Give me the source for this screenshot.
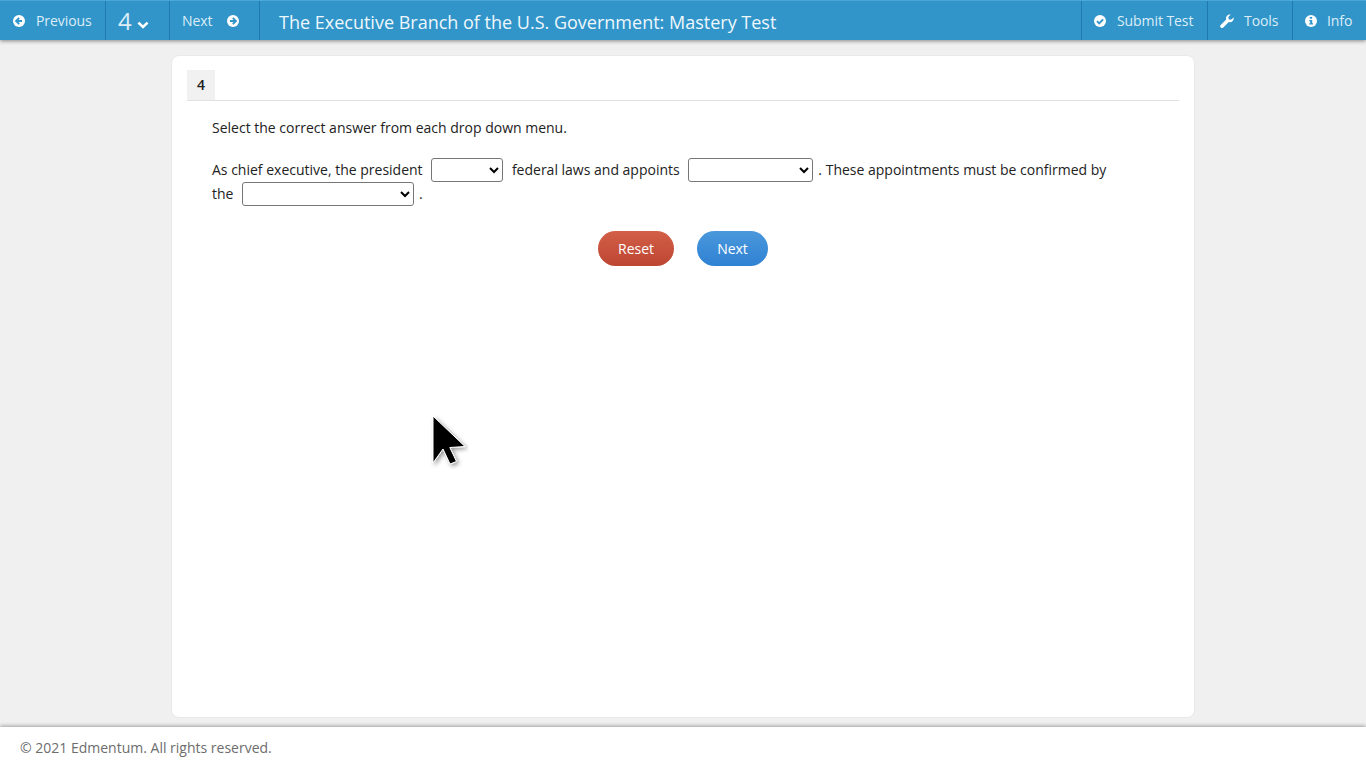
<template>
  <div class="page">
    <header class="topbar">
      <nav class="group">
        <button class="tb prev">
          <svg class="ic" viewBox="0 0 12 12"><circle cx="6" cy="6" r="6" fill="#fff"/><path d="M6.200 2.900 3.100 6l3.100 3.100M3.400 6h5.600" fill="none" stroke="#3195ca" stroke-width="1.900"/></svg>
          <span>Previous</span>
        </button>
        <button class="tb num">
          <span class="big">4</span>
          <svg class="chev" viewBox="0 0 12 8"><path d="M1.400 1.600 6 6l4.600-4.400" fill="none" stroke="#fff" stroke-width="2.600"/></svg>
        </button>
        <button class="tb next">
          <span>Next</span>
          <svg class="ic" viewBox="0 0 12 12"><circle cx="6" cy="6" r="6" fill="#fff"/><path d="M5.800 2.900 8.900 6 5.800 9.100M8.600 6H3" fill="none" stroke="#3195ca" stroke-width="1.900"/></svg>
        </button>
      </nav>
      <h1 class="title">The Executive Branch of the U.S. Government: Mastery Test</h1>
      <nav class="group right">
        <button class="tb submit">
          <svg class="ic" viewBox="0 0 12 12"><circle cx="6" cy="6" r="6" fill="#fff"/><path d="M3 6.100 5.200 8.300 9.100 4.300" fill="none" stroke="#3195ca" stroke-width="1.900"/></svg>
          <span>Submit Test</span>
        </button>
        <button class="tb tools">
          <svg class="ic wrench" viewBox="0 0 14 14"><path d="M13.600 3.400c.3 1.500-.1 3-1.200 3.900-1 .9-2.400 1.100-3.600.7l-5.500 5.500c-.7.7-1.900.7-2.600 0-.7-.7-.7-1.900 0-2.600L6.200 5.400C5.800 4.100 6 2.700 7 1.700 8 .7 9.400.3 10.800.6L8.300 3l.4 2.300 2.300.5z" fill="#fff"/></svg>
          <span>Tools</span>
        </button>
        <button class="tb info">
          <svg class="ic" viewBox="0 0 12 12"><circle cx="6" cy="6" r="6" fill="#fff"/><path d="M4.800 2h2.300v1.800H4.800zM4.300 5h2.900v3.300H8v1.300H4.300V8.300h.9V6.200h-.9z" fill="#3195ca"/></svg>
          <span>Info</span>
        </button>
      </nav>
    </header>

    <main class="main">
      <section class="card">
        <div class="tabline"><span class="tab">4</span></div>
        <div class="question">
          <p class="prompt">Select the correct answer from each drop down menu.</p>
          <p class="sentence">As chief executive, the president <select class="sel s1"><option></option></select> federal laws and appoints <select class="sel s2"><option></option></select>. These appointments must be confirmed by the <select class="sel s3"><option></option></select>.</p>
        </div>
        <div class="actions">
          <button class="pill reset">Reset</button>
          <button class="pill go">Next</button>
        </div>
      </section>
    </main>

    <footer class="footer">© 2021 Edmentum. All rights reserved.</footer>

    <svg class="cursor" viewBox="0 0 40 56" width="40" height="56">
      <defs>
        <filter id="curshadow" x="-30%" y="-30%" width="160%" height="160%"><feDropShadow dx="2" dy="2" stdDeviation="2" flood-color="#000" flood-opacity=".4"/></filter>
      </defs>
      <path d="M4 2 4 49 14 35 21 50 27.500 47.500 20.800 33.500 36 32.500z" fill="#000" stroke="#fff" stroke-width="1" filter="url(#curshadow)"/>
    </svg>
  </div>
</template>

<style>
html, body { margin: 0; background: #f0f0f0; }
</style>

<style scoped>
.page {
  position: relative;
  height: 768px;
  display: flex;
  flex-direction: column;
  overflow: hidden;
  background: #f0f0f0;
  font-family: "Open Sans", sans-serif;
  font-size: 14px;
  color: #222;
}
.topbar {
  height: 40px;
  flex: none;
  display: flex;
  align-items: stretch;
  background: #3195ca;
  border-top: 1px solid #4ba6d8;
  box-sizing: border-box;
  box-shadow: 0 1px 4px rgba(0, 0, 0, .45);
  z-index: 2;
}
.group { display: flex; align-items: stretch; }
.right { margin-left: auto; }
.tb {
  display: flex;
  align-items: center;
  padding: 0;
  border: 0;
  border-right: 1px solid #2079ad;
  background: transparent;
  color: #dcedf7;
  font: 14px "Open Sans", sans-serif;
  letter-spacing: -.08px;
  box-sizing: border-box;
}
.ic { width: 12px; height: 12px; flex: none; }
.prev { width: 106px; padding-left: 13px; gap: 11px; }
.num { width: 64px; padding-left: 12px; }
.big { font-size: 24px; line-height: 30px; }
.chev { width: 12px; height: 8px; margin: 8px 0 0 5px; }
.next { width: 90px; padding-left: 12px; gap: 15px; }
.title {
  margin: 0 0 0 19px;
  font-size: 18px;
  font-weight: 400;
  line-height: 42px;
  color: #eef7fc;
}
.right .tb { border-right: 0; border-left: 1px solid #2079ad; }
.submit { width: 126px; padding-left: 12px; gap: 11px; }
.tools { width: 85px; padding-left: 12px; gap: 10px; }
.info { width: 74px; padding-left: 12px; gap: 10px; }
.wrench { width: 14px; height: 14px; }
.main { flex: 1; min-height: 0; padding: 15px 171px 9px; box-sizing: border-box; }
.card {
  height: 100%;
  box-sizing: border-box;
  background: #fff;
  border: 1px solid #e9e9e9;
  border-radius: 8px;
  padding: 14px 15px 0;
}
.tabline { height: 30px; border-bottom: 1px solid #e2e2e2; display: flex; }
.tab {
  width: 28px;
  height: 30px;
  background: #f1f1f1;
  text-align: center;
  font-weight: 600;
  font-size: 14px;
  line-height: 29px;
}
.question { padding: 17px 25px 0; }
.prompt { margin: 0 0 20px; line-height: 20px; }
.sentence { margin: 0; line-height: 24px; width: 915px; }
.sel {
  height: 24px;
  margin: 0 5px;
  font-size: 14px;
  font-family: "Open Sans", sans-serif;
  vertical-align: top;
  background: #fff;
  box-sizing: border-box;
  border: 1px solid #767676;
  border-radius: 3px;
}
.s1 { width: 72px; }
.s2 { width: 125px; }
.s3 { width: 172px; }
.actions { display: flex; justify-content: center; gap: 23px; margin-top: 25px; }
.pill {
  height: 35px;
  border: 0;
  border-radius: 18px;
  color: #fff;
  font: 14px "Open Sans", sans-serif;
  padding: 0;
}
.reset { width: 76px; background: linear-gradient(#d35f47, #bd4633); }
.go { width: 71px; background: linear-gradient(#4a98dc, #2f82d3); }
.footer {
  height: 41px;
  flex: none;
  box-sizing: border-box;
  background: #fff;
  padding-left: 20px;
  line-height: 41px;
  color: #6d6d6d;
  box-shadow: 0 -1px 4px rgba(0, 0, 0, .35);
}
.cursor { position: absolute; left: 429px; top: 414px; }
</style>
